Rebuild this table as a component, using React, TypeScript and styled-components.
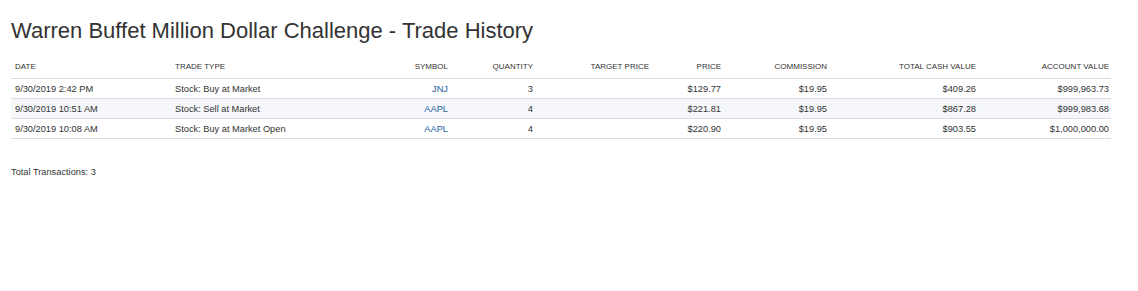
import React from "react";
import styled, { createGlobalStyle } from "styled-components";

type Trade = {
  date: string;
  type: string;
  symbol: string;
  quantity: number;
  target: string;
  price: string;
  commission: string;
  cash: string;
  account: string;
};

const trades: Trade[] = [
  { date: "9/30/2019 2:42 PM", type: "Stock: Buy at Market", symbol: "JNJ", quantity: 3, target: "", price: "$129.77", commission: "$19.95", cash: "$409.26", account: "$999,963.73" },
  { date: "9/30/2019 10:51 AM", type: "Stock: Sell at Market", symbol: "AAPL", quantity: 4, target: "", price: "$221.81", commission: "$19.95", cash: "$867.28", account: "$999,983.68" },
  { date: "9/30/2019 10:08 AM", type: "Stock: Buy at Market Open", symbol: "AAPL", quantity: 4, target: "", price: "$220.90", commission: "$19.95", cash: "$903.55", account: "$1,000,000.00" },
];

type Col = { key: keyof Trade; label: string; width: number; align: "left" | "right" };

const columns: Col[] = [
  { key: "date", label: "Date", width: 160, align: "left" },
  { key: "type", label: "Trade Type", width: 200, align: "left" },
  { key: "symbol", label: "Symbol", width: 81, align: "right" },
  { key: "quantity", label: "Quantity", width: 85, align: "right" },
  { key: "target", label: "Target Price", width: 116, align: "right" },
  { key: "price", label: "Price", width: 72, align: "right" },
  { key: "commission", label: "Commission", width: 106, align: "right" },
  { key: "cash", label: "Total Cash Value", width: 149, align: "right" },
  { key: "account", label: "Account Value", width: 131, align: "right" },
];

const GlobalStyle = createGlobalStyle`
  body {
    margin: 0;
    background: #fff;
    font-family: "Liberation Sans", Arial, sans-serif;
    color: #333;
  }
`;

export default function App() {
  return (
    <>
      <GlobalStyle />
      <Page>
        <Title>Warren Buffet Million Dollar Challenge - Trade History</Title>
        <Table>
          <colgroup>
            {columns.map((c) => (
              <col key={c.key} style={{ width: c.width }} />
            ))}
          </colgroup>
          <thead>
            <tr>
              {columns.map((c) => (
                <HeadCell key={c.key} $align={c.align}>
                  {c.label}
                </HeadCell>
              ))}
            </tr>
          </thead>
          <tbody>
            {trades.map((t, i) => (
              <Row key={i} $striped={i % 2 === 1}>
                {columns.map((c) => (
                  <Cell key={c.key} $align={c.align} $link={c.key === "symbol"}>
                    {t[c.key]}
                  </Cell>
                ))}
              </Row>
            ))}
          </tbody>
        </Table>
        <Footer>Total Transactions: {trades.length}</Footer>
      </Page>
    </>
  );
}

const Page = styled.div`
  padding: 17px 11px 0 11px;
  width: 1100px;
`;

const Title = styled.h1`
  margin: 0 0 13px 0;
  font-size: 22px;
  font-weight: 400;
  line-height: 28px;
  color: #333;
`;

const Table = styled.table`
  width: 1100px;
  border-collapse: collapse;
  table-layout: fixed;
`;

const HeadCell = styled.th<{ $align: "left" | "right" }>`
  text-align: ${(p) => p.$align};
  font-size: 8px;
  font-weight: 400;
  text-transform: uppercase;
  color: #333;
  padding: 3px 4px 7px 4px;
  height: 10px;
  border-bottom: 1px solid #ddd;
  white-space: nowrap;

  &:last-child {
    padding-right: 2px;
  }
`;

const Row = styled.tr<{ $striped: boolean }>`
  background: ${(p) => (p.$striped ? "#f5f7fa" : "#fff")};
`;

const Cell = styled.td<{ $align: "left" | "right"; $link: boolean }>`
  text-align: ${(p) => p.$align};
  font-size: 9.25px;
  color: ${(p) => (p.$link ? "#23609c" : "#333")};
  padding: 0 4px;
  height: 19px;
  border-bottom: 1px solid #ddd;
  white-space: nowrap;

  &:last-child {
    padding-right: 2px;
  }
`;

const Footer = styled.div`
  margin-top: 28px;
  font-size: 9.25px;
  color: #333;
`;
